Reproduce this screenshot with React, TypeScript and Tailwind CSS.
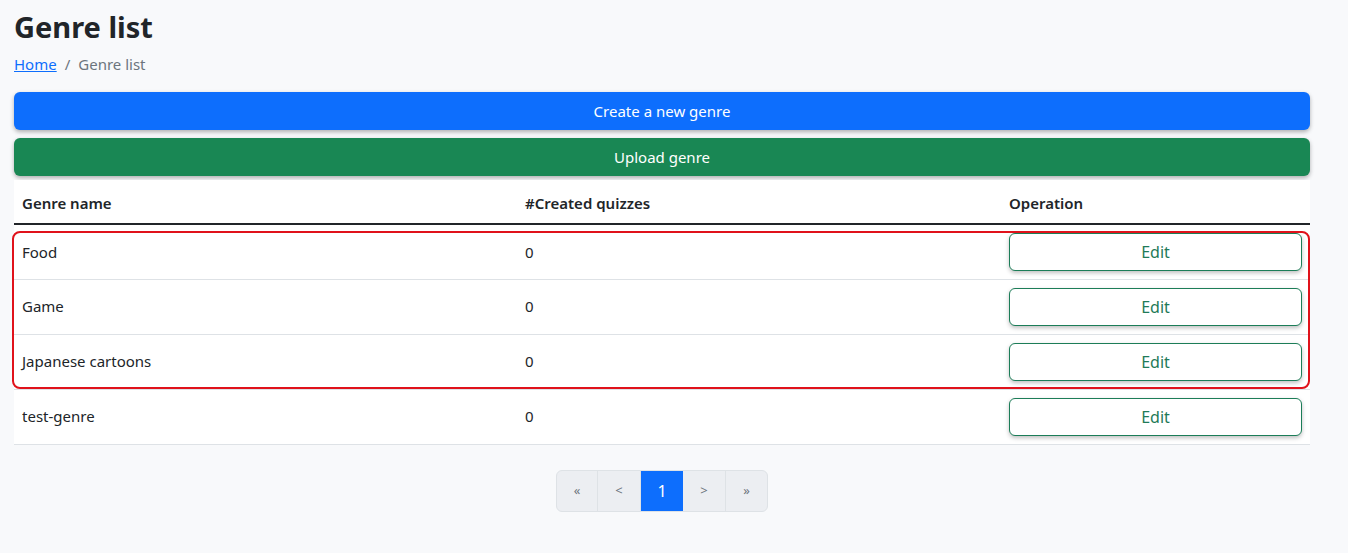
const rows = [
  { name: "Food", count: 0 },
  { name: "Game", count: 0 },
  { name: "Japanese cartoons", count: 0 },
  { name: "test-genre", count: 0 },
];

function EditButton() {
  return (
    <button
      type="button"
      className="h-[38px] w-full rounded-[6px] border border-[#1c7d58] bg-white text-[16px] text-[#1f7a58] shadow-[0_2px_4px_rgba(0,0,0,0.25)]"
    >
      Edit
    </button>
  );
}

export default function App() {
  return (
    <div
      className="min-h-[553px] bg-[#f8f9fb] px-[14px] pt-[6px] text-[#212529]"
      style={{ fontFamily: '"Noto Sans", "Open Sans", sans-serif' }}
    >
      <div className="w-[1296px]">
        <h1 className="text-[29px] font-bold leading-[42px]">Genre list</h1>
        <nav className="mt-[5px] flex items-center text-[15px] leading-[22px]">
          <a href="#" className="text-[#0d6efd] underline">
            Home
          </a>
          <span className="px-[8px] text-[#6c757d]">/</span>
          <span className="text-[#6c757d]">Genre list</span>
        </nav>

        <div className="mt-[17px] flex flex-col gap-[8px]">
          <button
            type="button"
            className="h-[38px] w-full rounded-[6px] bg-[#0d6efd] text-[15px] text-white shadow-[0_2px_4px_rgba(0,0,0,0.3)]"
          >
            Create a new genre
          </button>
          <button
            type="button"
            className="h-[38px] w-full rounded-[6px] bg-[#198754] text-[15px] text-white shadow-[0_2px_4px_rgba(0,0,0,0.3)]"
          >
            Upload genre
          </button>
        </div>

        <div className="relative mt-[4px]">
          <table className="w-full border-collapse bg-white text-[15px]">
            <thead>
              <tr className="border-b-2 border-[#212529]">
                <th className="h-[44px] w-[503px] px-[8px] pt-[4px] text-left font-semibold">Genre name</th>
                <th className="w-[484px] px-[8px] pt-[4px] text-left font-semibold">#Created quizzes</th>
                <th className="px-[8px] pt-[4px] text-left font-semibold">Operation</th>
              </tr>
            </thead>
            <tbody>
              {rows.map((r) => (
                <tr key={r.name} className="border-b border-[#dee2e6]">
                  <td className="h-[55px] px-[8px]">{r.name}</td>
                  <td className="px-[8px]">{r.count}</td>
                  <td className="px-[8px]">
                    <EditButton />
                  </td>
                </tr>
              ))}
            </tbody>
          </table>
          {/* highlight annotation */}
          <div className="pointer-events-none absolute left-[-2px] top-[51px] h-[158px] w-[1298px] rounded-[8px] border-2 border-[#e0121b]" />
        </div>

        <div className="mt-[25px] flex justify-center">
          <div className="flex h-[42px] overflow-hidden rounded-[6px] border border-[#dee2e6] bg-[#eceef2] text-[13px] text-[#6c757d]">
            <span className="flex w-[41px] items-center justify-center border-r border-[#dee2e6]">«</span>
            <span className="flex w-[43px] items-center justify-center border-r border-[#dee2e6]">&lt;</span>
            <span className="flex w-[42px] items-center justify-center bg-[#0d6efd] text-[16px] text-white">1</span>
            <span className="flex w-[43px] items-center justify-center border-r border-[#dee2e6]">&gt;</span>
            <span className="flex w-[41px] items-center justify-center">»</span>
          </div>
        </div>
      </div>
    </div>
  );
}
